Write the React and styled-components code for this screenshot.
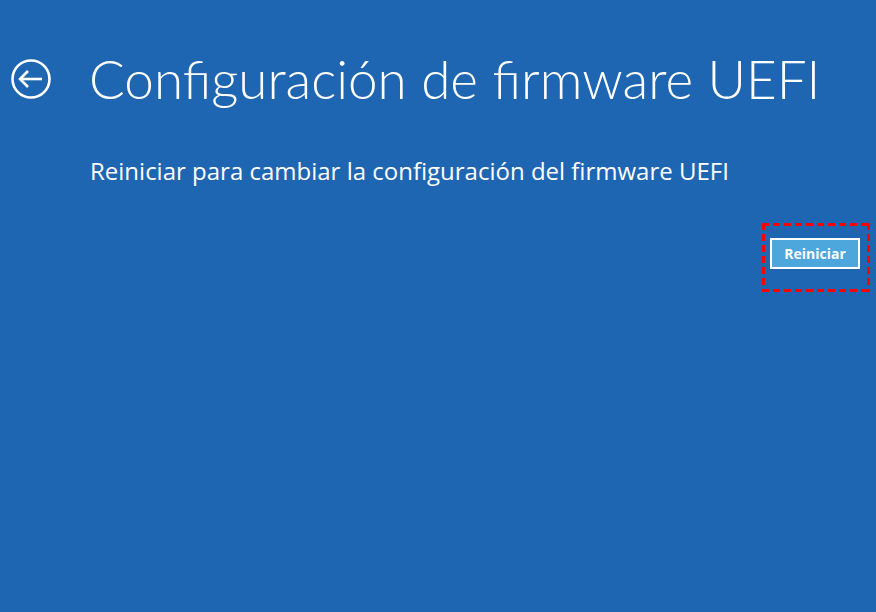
import { createGlobalStyle, styled } from 'styled-components';

const GlobalStyle = createGlobalStyle`
html, body {
  margin: 0;
  padding: 0;
  background: #1f66b2;
}
body {
  font-family: "Open Sans", Lato, sans-serif;
  color: #ffffff;
}
`

const Page = styled.div`
width: 876px;
height: 612px;
background: #1f66b2;
box-sizing: border-box;
padding: 49px 6px 0 11px;
display: flex;
flex-direction: column;
`

const Header = styled.div`
display: flex;
align-items: center;
gap: 38px;
`

const BackButton = styled.button`
width: 40px;
height: 40px;
padding: 0;
border: none;
background: none;
display: flex;
align-items: center;
justify-content: center;
cursor: pointer;
`

const Title = styled.h1`
margin: 0;
font-family: Lato, "Open Sans", sans-serif;
font-size: 53px;
font-weight: 300;
line-height: 60px;
white-space: nowrap;
`

const Body = styled.div`
padding-left: 79px;
margin-top: 46px;
`

const Subtitle = styled.p`
margin: 0;
font-size: 24px;
font-weight: 400;
line-height: 32px;
white-space: nowrap;
`

const Actions = styled.div`
display: flex;
justify-content: flex-end;
margin-top: 36px;
`

/* red dashed annotation frame: 3px thick, 7px dash / 4px gap */
const Highlight = styled.div`
padding: 15px 10px 23px 8px;
background:
  linear-gradient(to right, #ff0000 7px, transparent 7px) left top / 11px 3px repeat-x,
  linear-gradient(to right, #ff0000 7px, transparent 7px) left bottom / 11px 3px repeat-x,
  linear-gradient(to bottom, #ff0000 7px, transparent 7px) left top / 3px 11px repeat-y,
  linear-gradient(to bottom, #ff0000 7px, transparent 7px) right top / 3px 11px repeat-y;
`

const Button = styled.button`
width: 90px;
height: 31px;
box-sizing: border-box;
border: 2px solid #ffffff;
background: #4da6dc;
color: #ffffff;
font-family: "Open Sans", "Noto Sans", sans-serif;
font-size: 14px;
font-weight: 700;
padding: 0;
cursor: pointer;
`

function BackIcon() {
  return (
    <svg width="40" height="40" viewBox="0 0 40 40" fill="none" stroke="#ffffff" strokeWidth="2.6">
      <circle cx="20" cy="20" r="18.5" />
      <path d="M9 20 H31" />
      <path d="M17 12 L9 20 L17 28" strokeLinejoin="miter" />
    </svg>
  );
}

export default function App() {
  return (
    <>
      <GlobalStyle />
      <Page>
        <Header>
          <BackButton aria-label="Atrás">
            <BackIcon />
          </BackButton>
          <Title>Configuración de firmware UEFI</Title>
        </Header>
        <Body>
          <Subtitle>Reiniciar para cambiar la configuración del firmware UEFI</Subtitle>
        </Body>
        <Actions>
          <Highlight>
            <Button>Reiniciar</Button>
          </Highlight>
        </Actions>
      </Page>
    </>
  );
}
